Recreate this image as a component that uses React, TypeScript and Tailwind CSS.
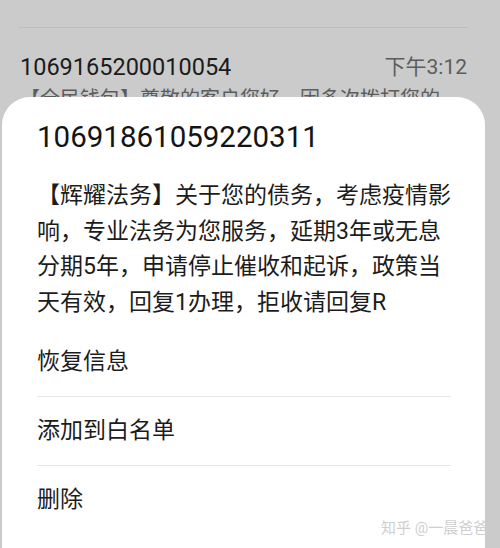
import React from "react";

const FONT = "Roboto, 'Noto Sans CJK SC', 'Noto Sans', sans-serif";

export default function App() {
  const body = [
    "【辉耀法务】关于您的债务，考虑疫情影",
    "响，专业法务为您服务，延期3年或无息",
    "分期5年，申请停止催收和起诉，政策当",
    "天有效，回复1办理，拒收请回复R",
  ];
  const items = ["恢复信息", "添加到白名单", "删除"];
  return (
    <div
      className="relative h-[548px] w-[500px] overflow-hidden bg-[#cbcbcb]"
      style={{ fontFamily: FONT }}
    >
      <div className="pl-[18px] pr-[33px] pt-[27px]">
        <div className="h-px w-[450px] bg-[#bdbdbd]" />
        <div className="mt-[24px] flex items-center justify-between pl-[2px]">
          <span className="text-[23.5px] leading-[30px] text-[#1b1b1b]">1069165200010054</span>
          <span className="text-[21px] leading-[30px] text-[#5c5c5c]">下午3:12</span>
        </div>
        <div className="mt-[4px] whitespace-nowrap pl-[2px] text-[20px] leading-[26px] text-[#5c5c5c]">
          【全民钱包】尊敬的客户您好，因多次拨打您的
        </div>
      </div>

      <div className="absolute bottom-0 left-[2px] top-[97px] w-[483px] rounded-t-[28px] bg-white pl-[35px] pr-[34px] pt-[22px]">
        <div className="text-[29.5px] leading-[36px] text-[#141414]">10691861059220311</div>
        <div className="mt-[23px] text-[23px] leading-[35.5px] text-[#1c1c1c]">
          {body.map((l) => (
            <div key={l} className="whitespace-nowrap">
              {l}
            </div>
          ))}
        </div>
        <div className="mt-[8px]">
          {items.map((t, i) => (
            <div key={t}>
              {i > 0 && <div className="h-px bg-[#e6e6e6]" />}
              <div className="flex h-[68px] items-center text-[23px] text-[#1c1c1c]">{t}</div>
            </div>
          ))}
        </div>
      </div>

      <div className="absolute left-[381px] top-[518px] whitespace-nowrap text-[15px] leading-[20px] text-[#cfcfcf]">
        知乎 @一晨爸爸
      </div>
    </div>
  );
}
